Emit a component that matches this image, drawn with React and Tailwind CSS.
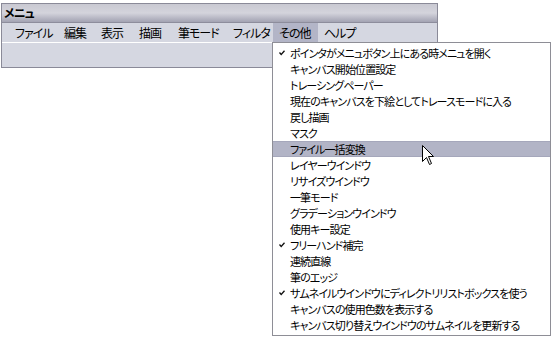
import { useMemo } from 'react'

const menus = [
  { label: 'ファイル', w: 'w-[49px]' },
  { label: '編集', w: 'w-[37px]' },
  { label: '表示', w: 'w-[38px]' },
  { label: '描画', w: 'w-[39px]' },
  { label: '筆モード', w: 'w-[55px]' },
  { label: 'フィルタ', w: 'w-[46px]' },
  { label: 'その他', w: 'w-[45px]', active: true },
  { label: 'ヘルプ', w: 'w-[44px]' },
]

const items = [
  { label: 'ポインタがメニュボタン上にある時メニュを開く', checked: true },
  { label: 'キャンバス開始位置設定' },
  { label: 'トレーシングペーパー' },
  { label: '現在のキャンバスを下絵としてトレースモードに入る' },
  { label: '戻し描画' },
  { label: 'マスク' },
  { label: 'ファイル一括変換', hover: true },
  { label: 'レイヤーウインドウ' },
  { label: 'リサイズウインドウ' },
  { label: '一筆モード' },
  { label: 'グラデーションウインドウ' },
  { label: '使用キー設定' },
  { label: 'フリーハンド補完', checked: true },
  { label: '連続直線' },
  { label: '筆のエッジ' },
  { label: 'サムネイルウインドウにディレクトリリストボックスを使う', checked: true },
  { label: 'キャンバスの使用色数を表示する' },
  { label: 'キャンバス切り替えウインドウのサムネイルを更新する' },
]

// 小さいチェックマーク
const Check = () => (
  <svg width="6" height="6" viewBox="0 0 6 6" className="block">
    <path d="M0.5 2.5 L2.2 4.5 L5.5 0.8" fill="none" stroke="#111" strokeWidth="1.3" />
  </svg>
)

// マウスカーソル
const Cursor = () => (
  <svg width="13" height="21" viewBox="0 0 13 21" className="block">
    <path
      d="M0.5 0.5 L0.5 16.5 L4.5 12.5 L7.5 19.5 L9.5 18.5 L6.5 11.5 L11.5 11.5 Z"
      fill="#fff"
      stroke="#000"
      strokeWidth="1"
      strokeLinejoin="miter"
    />
  </svg>
)

const App = () => {
  const rows = useMemo(() => items, [])

  return (
    <div className="relative w-[553px] h-[339px] bg-white overflow-hidden font-['Noto_Sans_CJK_JP','Noto_Sans',sans-serif] leading-none text-black [font-feature-settings:'palt']">
      {/* ウインドウ */}
      <div className="mt-[3px] ml-[1px] w-[437px] h-[65px] border border-[#8a8a98] bg-[#d5d7e1] flex flex-col">
        <div className="h-[19px] shrink-0 flex items-center px-[2px] bg-gradient-to-b from-[#c9c9d2] via-[#d4d4dc] to-[#a3a3b3] border-b border-[#8d8d9c]">
          <span className="font-bold text-[12px] tracking-[-1px]">メニュ</span>
        </div>
        <div className="h-[20px] shrink-0 flex items-stretch pl-[7px] border-b border-white text-[12px] tracking-[-1px]">
          {menus.map((m) => (
            <div
              key={m.label}
              className={`${m.w} shrink-0 flex items-center pl-[6px] whitespace-nowrap ${m.active ? 'bg-[#b3b5c7]' : ''}`}
            >
              {m.label}
            </div>
          ))}
        </div>
        <div className="flex-1" />
      </div>

      {/* ドロップダウン */}
      <div className="absolute left-[272px] top-[42px] w-[279px] h-[294px] bg-white border border-[#8e8e96] pt-[2px] flex flex-col text-[11px] tracking-[-0.9px]">
        {rows.map((it) => (
          <div
            key={it.label}
            className={`h-[16px] shrink-0 flex items-center whitespace-nowrap ${it.hover ? 'bg-[#b2b4c6] border-y border-[#a5a7bb]' : ''}`}
          >
            <div className="w-[17px] shrink-0 flex justify-end pr-[5px]">{it.checked && <Check />}</div>
            <span>{it.label}</span>
          </div>
        ))}
      </div>

      {/* カーソル */}
      <div className="absolute left-[422px] top-[145px]">
        <Cursor />
      </div>
    </div>
  )
}

export default App
